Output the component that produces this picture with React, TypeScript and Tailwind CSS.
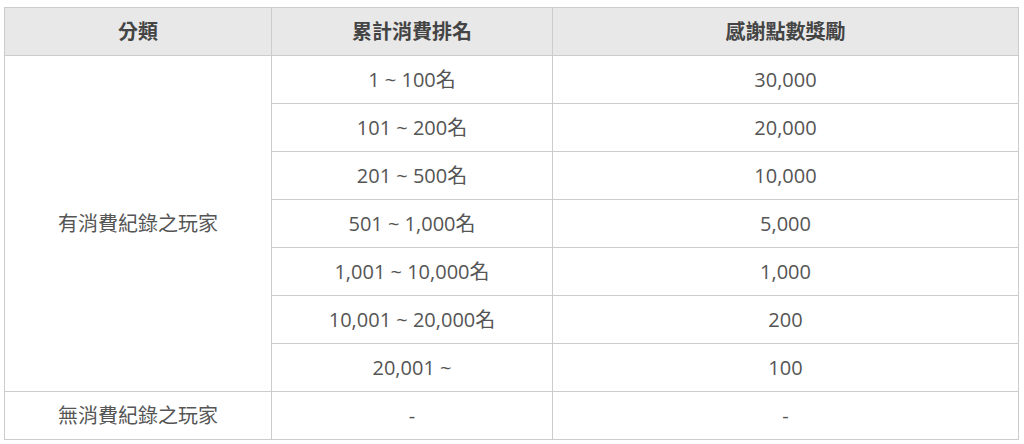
const rows = [
  ["1 ~ 100名", "30,000"],
  ["101 ~ 200名", "20,000"],
  ["201 ~ 500名", "10,000"],
  ["501 ~ 1,000名", "5,000"],
  ["1,001 ~ 10,000名", "1,000"],
  ["10,001 ~ 20,000名", "200"],
  ["20,001 ~", "100"],
];

const cell = "h-[48px] border border-[#cccccc] p-0 text-center align-middle";

export default function App() {
  return (
    <div
      className="bg-white pl-[4px] pt-[7px] text-[20px] text-[#555555]"
      style={{ fontFamily: '"Open Sans", "Noto Sans CJK TC", sans-serif' }}
    >
      <table className="w-[1015px] table-fixed border-collapse">
        <colgroup>
          <col className="w-[267px]" />
          <col className="w-[281px]" />
          <col />
        </colgroup>
        <thead>
          <tr className="bg-[#e8e8e8] text-[#444444]">
            <th className={`${cell} font-bold`}>分類</th>
            <th className={`${cell} font-bold`}>累計消費排名</th>
            <th className={`${cell} font-bold`}>感謝點數獎勵</th>
          </tr>
        </thead>
        <tbody>
          {rows.map(([rank, points], i) => (
            <tr key={rank}>
              {i === 0 && (
                <td className={cell} rowSpan={rows.length}>
                  有消費紀錄之玩家
                </td>
              )}
              <td className={cell}>{rank}</td>
              <td className={cell}>{points}</td>
            </tr>
          ))}
          <tr>
            <td className={cell}>無消費紀錄之玩家</td>
            <td className={cell}>-</td>
            <td className={cell}>-</td>
          </tr>
        </tbody>
      </table>
    </div>
  );
}
